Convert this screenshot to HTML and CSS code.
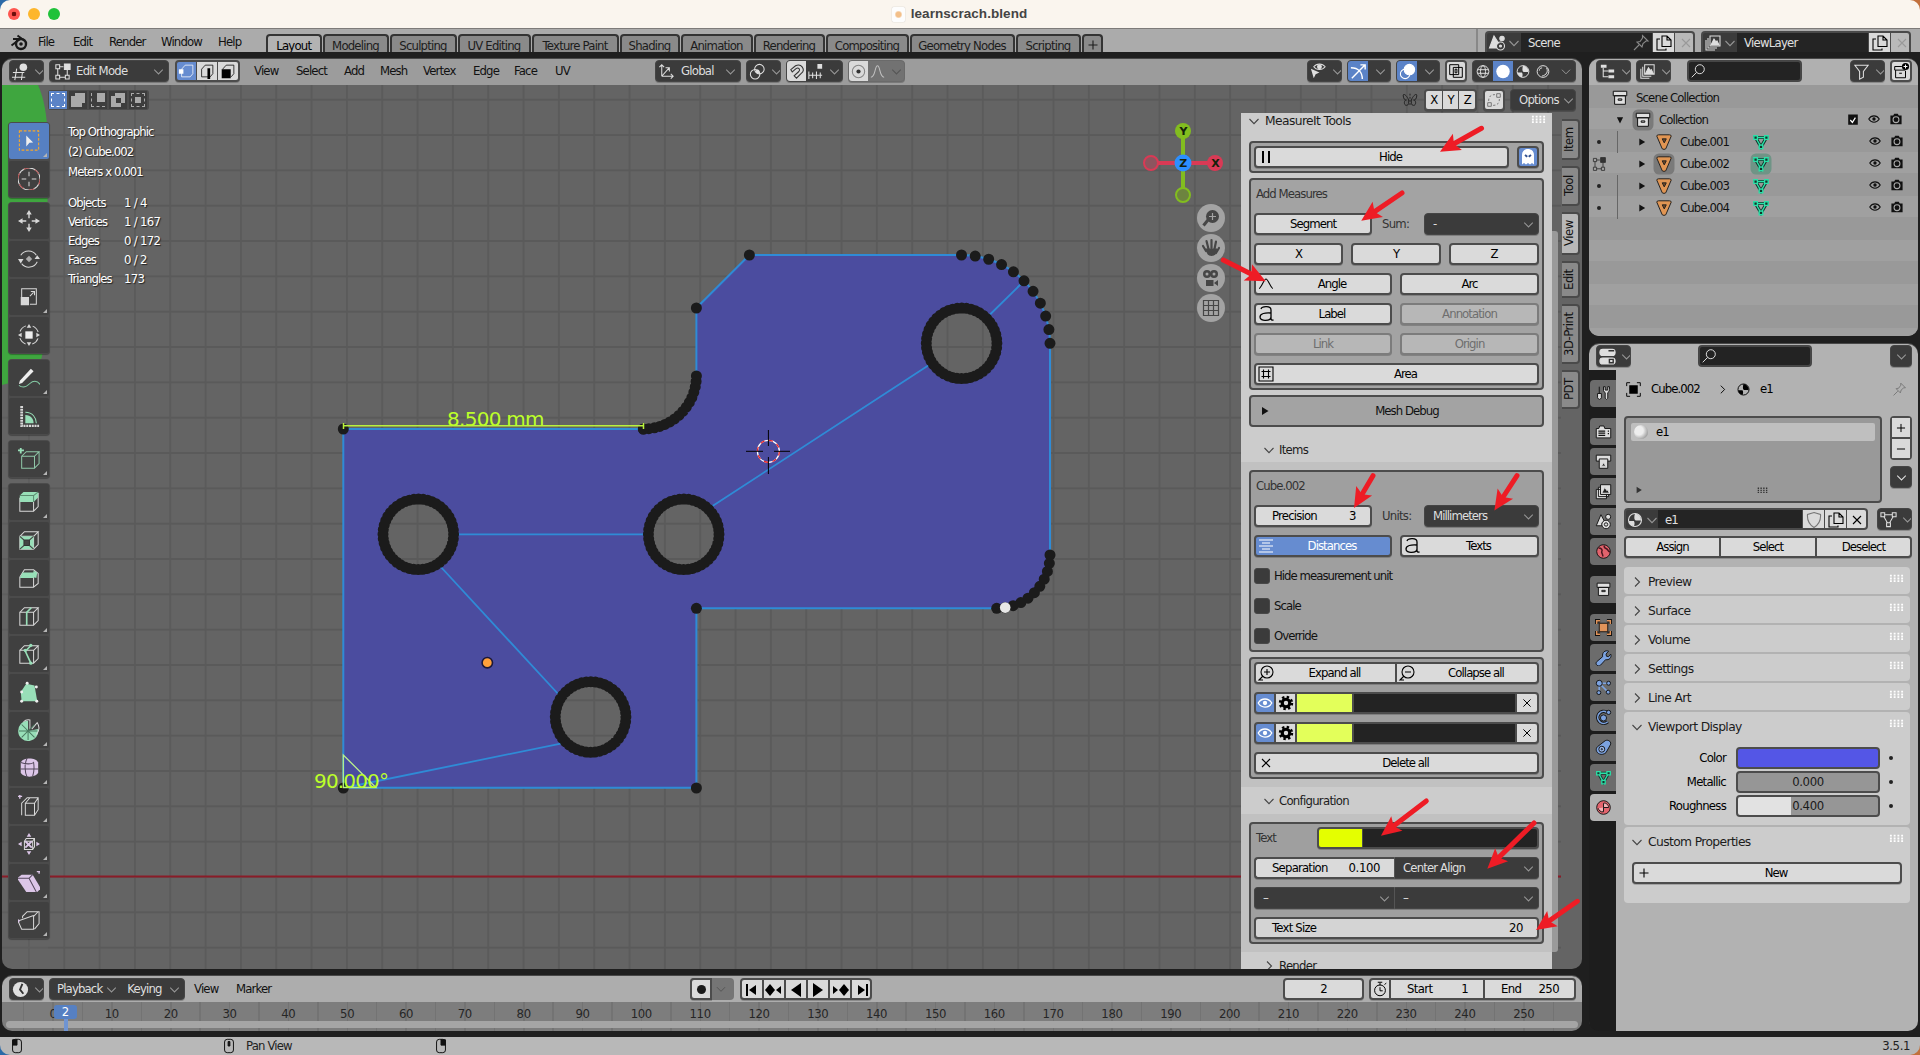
FILE: index.html
```html
<!DOCTYPE html>
<html lang="en">
<head>
<meta charset="utf-8">
<title>learnscrach.blend</title>
<link rel="stylesheet" href="styles.css">
</head>
<body>
<svg class="sprite" aria-hidden="true">
  <symbol id="chev" viewBox="0 0 20 20"><path d="M5.500 8l4.500 4.600L14.500 8"/></symbol>
  <symbol id="right" viewBox="0 0 20 20"><path d="M8 5.500l4.500 4.500L8 14.500"/></symbol>
  <symbol id="tri" viewBox="0 0 20 20"><path d="M7 6l6.500 4L7 14z" fill="currentColor" stroke="none"/></symbol>
  <symbol id="tridown" viewBox="0 0 20 20"><path d="M6.500 7h7L10 14z" fill="currentColor" stroke="none"/></symbol>
  <symbol id="x" viewBox="0 0 20 20"><path d="M6 6l8 8M14 6l-8 8"/></symbol>
  <symbol id="plus" viewBox="0 0 20 20"><path d="M10 5.500v9M5.500 10h9"/></symbol>
  <symbol id="minus" viewBox="0 0 20 20"><path d="M5.500 10h9"/></symbol>
  <symbol id="grip" viewBox="0 0 16 8"><path d="M1 1.500h14M1 4.500h14M1 7.500h14" stroke-width="2" stroke-dasharray="2 2"/></symbol>
  <symbol id="blender" viewBox="0 0 20 20"><path d="M2.500 13.500L11 7H4M8.500 3.500l7 5.200" stroke-width="2"/><circle cx="12" cy="12" r="5" stroke-width="2.400"/><circle cx="12" cy="12" r="1.800" fill="currentColor" stroke="none"/></symbol>
  <symbol id="view3d" viewBox="0 0 20 20"><path d="M2 11h12M1 16h14M6 7l-2 12M12 11l-1 8"/><circle cx="13" cy="5.500" r="4" fill="currentColor" stroke="none"/></symbol>
  <symbol id="editmode" viewBox="0 0 20 20"><path d="M5 7v7M7 16h6M15 8v6M7 5h4"/><path d="M3 3h4v4H3zM3 14h4v4H3zM13 14h4v4h-4z"/><path d="M12 2h6v6h-6z" fill="currentColor"/></symbol>
  <symbol id="cubevert" viewBox="0 0 20 20"><path d="M4 8l4-4.500h8.500V13l-3 3.500H4z" opacity=".75"/><path d="M1 8h5v5H1z" fill="currentColor" stroke="none"/></symbol>
  <symbol id="cubeedge" viewBox="0 0 20 20"><path d="M4 8l4-4.500h8.500V13l-3 3.500H4z" opacity=".75"/><path d="M10.500 7h3v12h-3z" fill="currentColor" stroke="none"/></symbol>
  <symbol id="cubeface" viewBox="0 0 20 20"><path d="M4 8l4-4.500h8.500V13l-3 3.500" opacity=".75"/><path d="M3 8h10v10H3z" fill="currentColor" stroke="none"/></symbol>
  <symbol id="axes" viewBox="0 0 20 20"><path d="M5 15V3M2.500 5.500L5 3l2.500 2.500M5 15h12M14.500 12.500L17 15l-2.500 2.500M5 15l8-9M9 6h4v4"/></symbol>
  <symbol id="pivot" viewBox="0 0 20 20"><circle cx="12" cy="7.500" r="5"/><circle cx="7.500" cy="13" r="5"/><circle cx="10" cy="10" r="1.600" fill="currentColor"/></symbol>
  <symbol id="magnet" viewBox="0 0 20 20"><path d="M4 8l5-4c6-3 11 4 6 8l-5 5-2.500-2.500 5-4.500c2-2-.5-5-3-3L5.500 10.500z"/></symbol>
  <symbol id="snapinc" viewBox="0 0 20 20"><path d="M3 10v8M7 11v6M11 10v8M15 11v6M3 14h14"/><path d="M12 2h5v5h-5z" fill="currentColor" stroke="none"/></symbol>
  <symbol id="prop" viewBox="0 0 20 20"><circle cx="10" cy="10" r="6.500" opacity=".5"/><circle cx="10" cy="10" r="2.200" fill="currentColor" stroke="none"/></symbol>
  <symbol id="falloff" viewBox="0 0 20 20"><path d="M3 16c5 0 4-12 7-12s2 12 7 12"/></symbol>
  <symbol id="viseye" viewBox="0 0 20 20"><path d="M5 5c3-4 9-4 12 0-3 4-9 4-12 0z"/><circle cx="11" cy="5" r="2" fill="currentColor"/><path d="M2 7l9 4-4 2-2 4z" fill="currentColor" stroke="none"/></symbol>
  <symbol id="gizmo" viewBox="0 0 20 20"><path d="M3 17L17 3M12 3h5v5M2 6c8 0 12 5 12 12" stroke-width="1.500"/></symbol>
  <symbol id="overlay" viewBox="0 0 20 20"><circle cx="12" cy="8" r="5.500" fill="currentColor"/><circle cx="7.500" cy="12.500" r="5"/></symbol>
  <symbol id="xray" viewBox="0 0 20 20"><path d="M3 3h10v11H3zM7 6h10v11H7z"/><path d="M9 8h2v4H9z"/></symbol>
  <symbol id="wire" viewBox="0 0 20 20"><circle cx="10" cy="10" r="6.500"/><ellipse cx="10" cy="10" rx="2.800" ry="6.500"/><path d="M4 8h12M4 12h12"/></symbol>
  <symbol id="solid" viewBox="0 0 20 20"><circle cx="10" cy="10" r="7.500" fill="currentColor" stroke="none"/></symbol>
  <symbol id="mat" viewBox="0 0 20 20"><circle cx="10" cy="10" r="6.500"/><path d="M10 3.500a6.500 6.500 0 0 1 6 7h-5c-2 0-2-4-1-7zM3.800 11h5c1 1 1 4 0 5.300-3-.5-5-2.800-5-5.300z" fill="currentColor" stroke="none"/></symbol>
  <symbol id="rendered" viewBox="0 0 20 20"><circle cx="10" cy="10" r="6.500"/><path d="M14 6c2 4 0 8-5 9M6 9c0-2 1-3 3-3"/></symbol>
  <symbol id="scene" viewBox="0 0 20 20"><path d="M7 3L2.500 15h7c-1-3 1-5 2-5z" fill="currentColor"/><circle cx="15" cy="5.500" r="2.200" fill="currentColor"/><circle cx="13.500" cy="13" r="4"/><circle cx="13.500" cy="13" r="1" fill="currentColor"/></symbol>
  <symbol id="layers" viewBox="0 0 20 20"><path d="M7 3h10v10H7zM5 5v10h9M3 7v10h9"/><path d="M8 12l3-6 2 3 1-1 2 4z" fill="currentColor"/></symbol>
  <symbol id="players" viewBox="0 0 20 20"><path d="M1.500 7.500h12v11h-12zM4 5h12v11H4z" fill="currentColor" stroke="#111"/><path d="M6.500 2h12v11.500h-12z" fill="currentColor" stroke="#111"/><path d="M8 12l3.500-7 2.500 4 1-1 2 4z" fill="#222"/></symbol>
  <symbol id="pscene" viewBox="0 0 20 20"><path d="M7 2L1.500 15h7c-1-3 1-5 2.500-5.500z" fill="currentColor" stroke="#111"/><circle cx="15.500" cy="4.500" r="3" fill="currentColor" stroke="#111"/><circle cx="13" cy="13.500" r="5" fill="currentColor" stroke="#111"/><circle cx="13" cy="13.500" r="2" stroke="#111"/></symbol>
  <symbol id="dup" viewBox="0 0 20 20"><path d="M8 3h5l4 4v6.500H8zM13 3v4h4"/><path d="M6 6H3v11h9v-1.500"/></symbol>
  <symbol id="pin" viewBox="0 0 20 20"><path d="M3 17l5-5M6 9l5 5 1-3.500L15 8h2l-5.500-5.500L11.500 5 9 8.500z"/></symbol>
  <symbol id="outliner" viewBox="0 0 20 20"><path d="M3 3h6v3H3zM11 8h6v3h-6zM11 14h6v3h-6z" fill="currentColor" stroke="none"/><path d="M5.500 6v9.500H11M5.500 9.500H11"/></symbol>
  <symbol id="search" viewBox="0 0 20 20"><circle cx="12" cy="8" r="5"/><path d="M8.500 11.500L3 17"/></symbol>
  <symbol id="filter" viewBox="0 0 20 20"><path d="M3 3.500h14l-5 6.500v6l-4 2V10z"/></symbol>
  <symbol id="newcoll" viewBox="0 0 20 20"><path d="M3 5h8M3 5v4h12M4 9v8.500h11V10M8 12.500h3"/><circle cx="15" cy="5" r="4" fill="currentColor" stroke="none"/><path d="M15 2.800v4.400M12.800 5h4.400" stroke="#fff"/></symbol>
  <symbol id="coll" viewBox="0 0 20 20"><path d="M2.500 2.500h15v5h-15zM4 7.500h12v9.500H4z" fill="#e0e0e0" stroke="#111"/><path d="M8 11h4v1.500H8z" stroke="#111"/></symbol>
  <symbol id="mesh" viewBox="0 0 20 20"><path d="M2 3.500q0-1.500 2-1.500h12q2 0 2 1.500L12 17.500q-2 1.500-4 0z" fill="#e09553" stroke="#222"/><path d="M8 6.500h4.500L10.300 11z" fill="#7a4b22" stroke="#222"/></symbol>
  <symbol id="meshdata" viewBox="0 0 20 20"><path d="M4 5h12L10 15.500z" stroke-width="3.600" stroke="#12352b"/><path d="M4 5h12L10 15.500z" stroke-width="1.500"/><path d="M2 3h4v4H2zM14 3h4v4h-4zM8 13.500h4v4H8z" fill="#12352b" stroke-width="1.500"/></symbol>
  <symbol id="tridata" viewBox="0 0 20 20"><path d="M4 5h12L10 15.500z"/><path d="M2 3h4v4H2zM14 3h4v4h-4zM8 13.500h4v4H8z" fill="#444"/></symbol>
  <symbol id="eye" viewBox="0 0 20 20"><path d="M2.500 10c3.500-6 11.500-6 15 0-3.500 6-11.500 6-15 0z" stroke-width="1.500"/><circle cx="10" cy="10" r="2.400" fill="currentColor" stroke="none"/></symbol>
  <symbol id="cam" viewBox="0 0 20 20"><path d="M2 5h4l1.500-2.500h5L14 5h4v12.500H2z" fill="currentColor" stroke="none"/><circle cx="10" cy="11" r="4.200" stroke="#aaa" stroke-width="1.500"/></symbol>
  <symbol id="check" viewBox="0 0 20 20"><path d="M2 1h16v17H2z" fill="currentColor" stroke="none"/><path d="M5.500 10l3.500 4 5-8" stroke="#fff" stroke-width="2"/></symbol>
  <symbol id="editor" viewBox="0 0 20 20"><rect x="2" y="2.500" width="16" height="6.500" rx="3" fill="currentColor"/><rect x="2" y="11.500" width="16" height="6.500" rx="3" fill="currentColor"/><path d="M11 4h6M12 13h4v3.500h-4z" stroke="#333" stroke-width="1.500"/></symbol>
  <symbol id="clock" viewBox="0 0 20 20"><circle cx="10" cy="10" r="8" fill="currentColor" stroke="none"/><path d="M12 4L9.500 10l3.500 4.500" stroke="#333" stroke-width="2"/></symbol>
  <symbol id="butterfly" viewBox="0 0 20 20"><path d="M10 3v14" stroke-dasharray="2 1.500"/><path d="M8.500 10C6 4 2 2 2.500 5.500S4 10 6 10c-3 0-3 6 0 6s2.500-3 2.500-6zM11.500 10c2.500-6 6.500-8 6-4.500S16 10 14 10c3 0 3 6 0 6s-2.500-3-2.500-6z"/></symbol>
  <symbol id="automerge" viewBox="0 0 20 20"><path d="M3 13h4v4H3zM13 3h4v4h-4z"/><path d="M4 11c0-5 3-7 7-7M9 16c5 0 7-3 7-7" stroke-dasharray="2.500 2"/></symbol>
  <symbol id="ghost" viewBox="0 0 20 20"><path d="M4 17.500V8c0-8 12-8 12 0v9.500l-2-1.500-2 1.500-2-1.500-2 1.500L6 16z" fill="#fff" stroke="none"/><path d="M7 8l2.300 1.700M13 8l-2.300 1.700" stroke="#31508f" stroke-width="2"/></symbol>
  <symbol id="pause" viewBox="0 0 20 20"><path d="M7 4v12M13 4v12" stroke-width="2"/></symbol>
  <symbol id="angle" viewBox="0 0 20 20"><path d="M3 14.500c2 0 5-9.500 7-9.500s5 9.500 7 9.500"/></symbol>
  <symbol id="fonta" viewBox="0 0 20 20"><path d="M5 5c1-3 10-3.500 10 1v8.500q0 2 2.500 1.500M15 9c-6-.5-11 .5-11 4 0 5 11 4 11 0" stroke-width="1.300"/></symbol>
  <symbol id="hash" viewBox="0 0 20 20"><path d="M3 3h14v14H3zM7.500 5.500v9M12.500 5.500v9M5.500 7.500h9M5.500 12.500h9"/></symbol>
  <symbol id="center" viewBox="0 0 20 20"><path d="M3 4h14M6 7h8M3 10h14M6 13h8M3 16h14"/></symbol>
  <symbol id="zoomin" viewBox="0 0 20 20"><circle cx="11" cy="9" r="6"/><path d="M7 13l-4 4h4M11 6v6M8 9h6"/></symbol>
  <symbol id="zoomout" viewBox="0 0 20 20"><circle cx="11" cy="9" r="6"/><path d="M7 13l-4 4h4M8 9h6"/></symbol>
  <symbol id="gear" viewBox="0 0 20 20"><circle cx="10" cy="10" r="4.200" stroke-width="3.500"/><circle cx="10" cy="10" r="6.500" stroke-width="3" stroke-dasharray="2.600 2.500"/></symbol>
  <symbol id="stopwatch" viewBox="0 0 20 20"><circle cx="10" cy="11.500" r="6"/><path d="M7.500 2.500h5M10 3v3M10 8v4h3M15 5l2-1.500"/></symbol>
  <symbol id="shield" viewBox="0 0 20 20"><path d="M10 2.500l6.500 2c.5 6-1.500 10-6.500 13-5-3-7-7-6.500-13z" stroke="#777"/></symbol>
  <symbol id="objbox" viewBox="0 0 20 20"><path d="M5 5h10v10H5z" fill="currentColor" stroke="none"/><path d="M2 6V2h4M14 2h4v4M18 14v4h-4M6 18H2v-4"/></symbol>
  <symbol id="pobj" viewBox="0 0 20 20"><path d="M2 6V2h4M14 2h4v4M18 14v4h-4M6 18H2v-4" stroke="#111" stroke-width="4"/><path d="M2 6V2h4M14 2h4v4M18 14v4h-4M6 18H2v-4" stroke-width="1.800"/><path d="M5 5h10v10H5z" fill="currentColor" stroke="#111"/></symbol>
  <symbol id="tools" viewBox="0 0 20 20"><path d="M5 2v8M3 10h4.500v5q-2.200 4-4.500 0z" fill="currentColor" stroke="#111"/><path d="M10 2v4.500q.5 2 2 2.500v6.500q1.500 3 3 0V9q2-1 2-3.500V2h-2v4h-3V2z" fill="currentColor" stroke="#111"/></symbol>
  <symbol id="prender" viewBox="0 0 20 20"><path d="M1.500 6.500h3l1-3h5l1 3h7v11h-17z" fill="currentColor" stroke="#111"/><path d="M4 9.500h8M4 12h8M4 14.500h8M15 9.500h1.500M15 12.500h1.500" stroke="#111" stroke-width="1.500"/></symbol>
  <symbol id="pout" viewBox="0 0 20 20"><path d="M1.500 2.500h17v7h-17z" fill="currentColor" stroke="#111"/><path d="M5 7h10v11H5z" fill="currentColor" stroke="#111"/><path d="M7.500 15.500l2.500-4 3 4z" fill="#333"/></symbol>
  <symbol id="world" viewBox="0 0 20 20"><circle cx="10" cy="10" r="8" fill="currentColor" stroke="#111"/><path d="M4 6c4 0 5 2 4 4s2 3 1 6M11 3c-1 3 1 3 3 4s1 4 4 3" stroke="#4a1820" stroke-width="1.800"/></symbol>
  <symbol id="wrench" viewBox="0 0 20 20"><path d="M2 15l7-6c-1-5 3-8 7-6.500l-3 3.500.5 2.500 2.500.5 2.500-3c1.500 4-2 7.500-6 6.500l-6 6.500c-2.500 2.500-7-1-4.500-4z" fill="currentColor" stroke="#111"/></symbol>
  <symbol id="particles" viewBox="0 0 20 20"><path d="M5 5v11M5 5h10M5 5l10 10" stroke-width="2"/><g fill="currentColor" stroke="#111"><circle cx="5" cy="5" r="3.500"/><circle cx="4.500" cy="16" r="2.300"/><circle cx="16" cy="5" r="2.300"/><circle cx="15.500" cy="15.500" r="2.300"/></g></symbol>
  <symbol id="physics" viewBox="0 0 20 20"><path d="M15 15a7 7 0 1 1-1-11" stroke="#111" stroke-width="4"/><path d="M15 15a7 7 0 1 1-1-11" stroke-width="2"/><circle cx="10" cy="10.500" r="3.600" fill="currentColor" stroke="#111"/><circle cx="16" cy="4" r="2.500" fill="currentColor" stroke="#111"/></symbol>
  <symbol id="constraint" viewBox="0 0 20 20"><path d="M3 9l9-7c4-2 8 2 6 5l-5 9c-7 6-15-2-10-7z" fill="currentColor" stroke="#111"/><circle cx="8" cy="12" r="3.500" stroke="#111" fill="#9ab8ea"/><circle cx="8" cy="12" r=".8" stroke="#111"/></symbol>
  <symbol id="pmat" viewBox="0 0 20 20"><circle cx="10" cy="10" r="8" fill="currentColor" stroke="#111"/><path d="M10 10V5c3-1 6 2 6 5zM10 10v5c-3 1-6-2-6-4" fill="#f4b0b5" stroke="#111"/></symbol>
  <symbol id="mouseL" viewBox="0 0 12 18"><rect x="1" y="1.500" width="10" height="15" rx="3"/><path d="M1 2h5v6H1z" fill="currentColor"/></symbol>
  <symbol id="mouseM" viewBox="0 0 12 18"><rect x="1" y="1.500" width="10" height="15" rx="3"/><path d="M5 4h2v5H5z" fill="currentColor"/></symbol>
  <symbol id="mouseR" viewBox="0 0 12 18"><rect x="1" y="1.500" width="10" height="15" rx="3"/><path d="M6 2h5v6H6z" fill="currentColor"/></symbol>
  <symbol id="tselect" viewBox="0 0 24 24"><rect x="1.500" y="1" width="21" height="21" stroke="#f6a72b" stroke-width="1.200" stroke-dasharray="3 1.800"/><path d="M9 6l7.500 7.500-4 .5L9 18z" fill="#eee" stroke="none"/></symbol>
  <symbol id="tcursor" viewBox="0 0 24 24"><circle cx="12" cy="12" r="12" stroke="#ddd"/><circle cx="12" cy="12" r="12" stroke="#a44" stroke-dasharray="6.280"/><path d="M12 4v5M12 15v5M4 12h5M15 12h5"/></symbol>
  <symbol id="tmove" viewBox="0 0 24 24"><path d="M12 4v5M12 15v5M4 12h5M15 12h5" stroke-width="1.500"/><path d="M12 0l3 5H9zM12 24l3-5H9zM0 12l5-3v6zM24 12l-5-3v6z" fill="currentColor" stroke="none"/></symbol>
  <symbol id="trotate" viewBox="0 0 24 24"><path d="M3 8a10 10 0 0 1 17 0M21 15a10 10 0 0 1-17 2" /><path d="M0 12h6l-3 5zM18 12h6l-3-4z" fill="currentColor" stroke="none"/><path d="M12 8.500l3.500 3.500-3.500 3.500L8.500 12z" fill="#aaa" stroke="none"/></symbol>
  <symbol id="tscale" viewBox="0 0 24 24"><path d="M4 12V3h16v17h-7"/><path d="M3 12h9v9H3z" fill="currentColor" stroke="none"/><path d="M13 11l4-4M14 6h4v4"/></symbol>
  <symbol id="ttrans" viewBox="0 0 24 24"><circle cx="12" cy="12" r="10.500" stroke-dasharray="9 7.490" stroke-dashoffset="-3.750"/><path d="M8 8h8v8H8z" fill="#eee" stroke="none"/><path d="M12 0l2.500 4h-5zM12 24l2.500-4h-5zM0 12l4-2.500v5zM24 12l-4-2.500v5z" fill="currentColor" stroke="none"/></symbol>
  <symbol id="tpen" viewBox="0 0 24 24"><path d="M2 15l12-13 3 2.500L4.500 17.500 1 18.500z" fill="#eee" stroke="none"/><path d="M1 20c5 4 9 1 12-2s8-4 11 1" stroke="#85cda6"/></symbol>
  <symbol id="tmeasure" viewBox="0 0 24 24"><path d="M4 1v22h19" stroke-width="3" stroke-dasharray="2.200 .8"/><path d="M8 20v-9c6 0 9 4 9 9z" fill="#98dfb8" stroke="none"/><path d="M8 8c8 0 12 6 12 12" stroke="#98dfb8"/></symbol>
  <g id="cubelines"><path d="M2 8h15v14H2zM2 8l5-5h15l-5 5M22 3v14l-5 5"/></g>
  <symbol id="taddcube" viewBox="0 0 24 24"><path d="M4 9h14v13H4zM4 9l5-5h14l-5 5M23 4v13l-5 5" stroke="#8fc7a8"/><path d="M3 -1v7M-.5 2.500h7" stroke="#98dfb8" stroke-width="2"/></symbol>
  <symbol id="textrude" viewBox="0 0 24 24"><use href="#cubelines"/><path d="M2 5l4-4h16v6l-5 5H2z" fill="#98dfb8" stroke="none"/><path d="M2 5h15v7M17 5l5-4" stroke="#5b8b70"/></symbol>
  <symbol id="tinset" viewBox="0 0 24 24"><use href="#cubelines"/><path d="M2 8h15v14H2z" fill="#98dfb8" stroke="none"/><path d="M6.500 12h6v6h-6z" fill="#444" stroke="#333"/><path d="M2 8l4.500 4M17 8l-4.500 4M2 22l4.500-4M17 22l-4.500-4" stroke="#444"/></symbol>
  <symbol id="tbevel" viewBox="0 0 24 24"><path d="M2 11v11h15V11M2 11l5-8h10l5 4v11l-5 4"/><path d="M2 12l3-6h12v6zM17 4l4 2-1 6-4-1z" fill="#98dfb8" stroke="none"/></symbol>
  <symbol id="tloop" viewBox="0 0 24 24"><use href="#cubelines"/><path d="M9.500 22V8l5-5" stroke="#98dfb8" stroke-width="1.800"/></symbol>
  <symbol id="tknife" viewBox="0 0 24 24"><use href="#cubelines"/><path d="M14 22L8 9l6-6" stroke="#98dfb8" stroke-width="1.800"/><g fill="#98dfb8" stroke="none"><circle cx="14" cy="22" r="1.800"/><circle cx="8" cy="8" r="1.800"/><circle cx="14" cy="2.500" r="1.800"/></g></symbol>
  <symbol id="tpoly" viewBox="0 0 24 24"><path d="M4 22l-1-10 6-9 9 2 3 17z" fill="#98dfb8" stroke="none"/><g fill="#eee" stroke="none"><circle cx="4" cy="22" r="1.600"/><circle cx="4" cy="12" r="1.600"/><circle cx="10" cy="2.500" r="1.600"/><circle cx="20" cy="6.500" r="1.600"/><circle cx="20.500" cy="22" r="1.600"/></g></symbol>
  <symbol id="tspin" viewBox="0 0 24 24"><path d="M11 13V2a11 11 0 1 0 11 9z" fill="#98dfb8" stroke="none"/><path d="M13 11V1q-4-1-7 2M15 11l6-7c2 3 3 8-1 13"/><path d="M11 13v10M1 13h20M4 20l14-14M4 6l14 14" stroke="#4a7a60"/></symbol>
  <symbol id="tsmooth" viewBox="0 0 24 24"><path d="M3 6c2-6 17-6 19 0v11c-2 6-17 6-19 0z" fill="#dcc6e8" stroke="none"/><path d="M3 13h19M10 1c-3 6-3 15 0 21M3 6c5 2 12 2 14 0 1 6 0 12-1 15" stroke="#54485c"/></symbol>
  <symbol id="tslide" viewBox="0 0 24 24"><path d="M8 9h10v13H8zM4 22V9l6-6h12v13l-4 6M8 9l5-6M18 9l4-6"/><path d="M2 -1v5M-.5 1.500h5" stroke="#dcc6e8" stroke-width="1.500"/></symbol>
  <symbol id="tshrink" viewBox="0 0 24 24"><path d="M7 9h9v9H7zM7 9l2-3h9v9l-2 3M16 9l2-3"/><path d="M8 9l7 7M15 9l-7 7" stroke="#dcc6e8" stroke-width="2"/><path d="M12 0l2.500 4h-5zM12 24l2.500-4h-5zM0 12l4-2.500v5zM24 12l-4-2.500v5z" fill="#dcc6e8" stroke="none"/></symbol>
  <symbol id="tshear" viewBox="0 0 24 24"><path d="M-1 8l5-4h12l9 15-4 4H9z" fill="#dcc6e8" stroke="none"/><path d="M-1 8h13l8 15M12 8l4-4" stroke="#54485c"/><path d="M23 -2v5M20.500 .5h5" stroke="#dcc6e8" stroke-width="1.500"/></symbol>
  <symbol id="trip" viewBox="0 0 24 24"><path d="M17 8v14H4L0 13l17-6M5 10V8l5-5h13v13l-5 6M17 8l5-5"/><circle cx="0" cy="13" r="1.800" fill="#dcc6e8" stroke="none"/></symbol>
</svg>

<div class="window">
  <header class="titlebar">
    <div class="lights"><i class="close"></i><i class="mini"></i><i class="zoom"></i></div>
    <div class="doc"><i class="docicon"></i>learnscrach.blend</div>
  </header>

  <nav class="topbar">
    <svg class="i logo"><use href="#blender"/></svg>
    <div class="menus"><span>File</span><span>Edit</span><span>Render</span><span>Window</span><span>Help</span></div>
    <div class="tabs"><b class="on">Layout</b><b>Modeling</b><b>Sculpting</b><b>UV Editing</b><b>Texture Paint</b><b>Shading</b><b>Animation</b><b>Rendering</b><b>Compositing</b><b>Geometry Nodes</b><b>Scripting</b><b><svg class="i"><use href="#plus"/></svg></b></div>
    <div class="ids">
      <div class="idsel"><span class="dk"><svg class="i"><use href="#scene"/></svg><svg class="i ch"><use href="#chev"/></svg></span><span class="fld">Scene<svg class="i dim"><use href="#pin"/></svg></span><span class="lt"><svg class="i"><use href="#dup"/></svg></span><span class="lt off"><svg class="i"><use href="#x"/></svg></span></div>
      <div class="idsel"><span class="dk"><svg class="i"><use href="#layers"/></svg><svg class="i ch"><use href="#chev"/></svg></span><span class="fld">ViewLayer</span><span class="lt"><svg class="i"><use href="#dup"/></svg></span><span class="lt off"><svg class="i"><use href="#x"/></svg></span></div>
    </div>
  </nav>

  <main class="work">
    <div class="leftcol">
      <section class="area view3d">
        <div class="ahead">
          <div class="dd w35"><svg class="i"><use href="#view3d"/></svg><svg class="i ch"><use href="#chev"/></svg></div>
          <div class="dd w120"><svg class="i"><use href="#editmode"/></svg><em>Edit Mode</em><svg class="i ch"><use href="#chev"/></svg></div>
          <div class="seg selmode"><span class="blue"><svg class="i"><use href="#cubevert"/></svg></span><span><svg class="i"><use href="#cubeedge"/></svg></span><span><svg class="i"><use href="#cubeface"/></svg></span></div>
          <div class="menus vm"><span>View</span><span>Select</span><span>Add</span><span>Mesh</span><span>Vertex</span><span>Edge</span><span>Face</span><span>UV</span></div>
          <div class="dd w88"><svg class="i"><use href="#axes"/></svg><em>Global</em><svg class="i ch"><use href="#chev"/></svg></div>
          <div class="dd w35"><svg class="i"><use href="#pivot"/></svg><svg class="i ch"><use href="#chev"/></svg></div>
          <div class="dd w57 split"><span class="wt"><svg class="i"><use href="#magnet"/></svg></span><svg class="i"><use href="#snapinc"/></svg><svg class="i ch"><use href="#chev"/></svg></div>
          <div class="dd w57 split faded"><span class="wt"><svg class="i"><use href="#prop"/></svg></span><svg class="i"><use href="#falloff"/></svg><svg class="i ch"><use href="#chev"/></svg></div>
          <div class="push dd w35"><svg class="i"><use href="#viseye"/></svg><svg class="i ch"><use href="#chev"/></svg></div>
          <div class="dd w44 split"><span class="bl"><svg class="i"><use href="#gizmo"/></svg></span><svg class="i ch"><use href="#chev"/></svg></div>
          <div class="dd w44 split"><span class="bl"><svg class="i"><use href="#overlay"/></svg></span><svg class="i ch"><use href="#chev"/></svg></div>
          <div class="btn sq"><svg class="i"><use href="#xray"/></svg></div>
          <div class="dd w104 shade"><span><svg class="i"><use href="#wire"/></svg></span><span class="bl"><svg class="i"><use href="#solid"/></svg></span><span><svg class="i"><use href="#mat"/></svg></span><span><svg class="i"><use href="#rendered"/></svg></span><span><svg class="i ch"><use href="#chev"/></svg></span></div>
        </div>

        <div class="stage">
          <svg class="canvas" viewBox="2 85 1580 884">
            <defs>
              <pattern id="grid" x="63.300" y="63.400" width="35.330" height="35.330" patternUnits="userSpaceOnUse"><path d="M1 0v35.330M0 1h35.330" stroke="#5a5a5a" stroke-width="1.800"/></pattern>
            </defs>
            <rect x="2" y="85" width="1580" height="884" fill="#646464"/>
            <path d="M2 85H38q9 20 9.500 52V290q0 45-6 68-8 20-39.500 27z" fill="#3fa63f"/>
            <rect x="2" y="385" width="46" height="584" fill="url(#grid)" opacity=".6"/>
            <rect x="48" y="85" width="1513" height="884" fill="url(#grid)"/>
            <path d="M2 876.500H1561" stroke="#8a1c28" stroke-width="2"/>
            <path fill-rule="evenodd" fill="#4b4c9f" stroke="#2f8bd6" stroke-width="2" d="M343.300 429V787.800H696.400V608.300H996.700A53.300 53.300 0 0 0 1050 555V343.300A88.500 88.500 0 0 0 961.500 255H749.400L696.400 308V376A53 53 0 0 1 643.300 429zM453.600 534.300a35.300 35.300 0 1 0-70.600 0a35.300 35.300 0 1 0 70.600 0zM719 534.300a35.300 35.300 0 1 0-70.600 0a35.300 35.300 0 1 0 70.600 0zM996.900 343.300a35.300 35.300 0 1 0-70.600 0a35.300 35.300 0 1 0 70.600 0zM625.900 717a35.300 35.300 0 1 0-70.600 0a35.300 35.300 0 1 0 70.600 0z"/>
            <g stroke="#2f8bd6" stroke-width="1.800" fill="none"><path d="M455 534.300H648M711 507L929 365M989 315.500L1024 281M440 566L560 696M562 743.300L343.300 788"/></g>
            <g fill="none" stroke="#1b1b1b" stroke-width="11" stroke-linecap="round" stroke-dasharray="0 4.620">
              <circle cx="418.300" cy="534.300" r="35.300"/><circle cx="683.700" cy="534.300" r="35.300"/><circle cx="961.600" cy="343.300" r="35.300"/><circle cx="590.600" cy="717" r="35.300"/>
              <path d="M696.400 376A53 53 0 0 1 643.300 429" stroke-dasharray="0 5.540"/>
              <path d="M1050 555A53.300 53.300 0 0 1 996.700 608.300" stroke-dasharray="0 8.360"/>
              <path d="M1050 343.300A88.400 88.400 0 0 0 961.500 255" stroke-dasharray="0 13.870"/>
            </g>
            <g fill="#1b1b1b"><circle cx="343.300" cy="429" r="5.500"/><circle cx="343.300" cy="788" r="5.500"/><circle cx="696.400" cy="788" r="5.500"/><circle cx="696.400" cy="608.300" r="5.500"/><circle cx="696.400" cy="308" r="5.500"/><circle cx="749.400" cy="255" r="5.500"/><circle cx="643.300" cy="429" r="5.500"/><circle cx="996.700" cy="608.300" r="5.500"/><circle cx="961.500" cy="255" r="5.500"/></g>
            <circle cx="1005.200" cy="607.600" r="5.300" fill="#e8e8e8"/>
            <circle cx="487.300" cy="662.700" r="5.200" fill="#ffa03a" stroke="#1c1838" stroke-width="1.600"/>
            <path d="M343.500 425.700H643.500M343.500 423v6M643.500 423v6" stroke="#b9f23c" stroke-width="1.500"/>
            <path d="M343.300 755V787.500H376z" fill="none" stroke="#b9f08c" stroke-width="1.300"/>
            <text class="dim3" x="447" y="425.700" textLength="97.500">8.500 mm</text>
            <text class="dim3" x="314" y="788" textLength="75">90.000°</text>
            <circle cx="768.400" cy="451.300" r="11" fill="none" stroke="#fff" stroke-width="1.200"/><circle cx="768.400" cy="451.300" r="11" fill="none" stroke="#e22" stroke-width="1.200" stroke-dasharray="4.320"/>
            <path d="M768.400 430v16M768.400 457v17M746 451.300h17M774 451.300h16" stroke="#000"/>
            <path d="M1183 131v64" stroke="#82bd1f" stroke-width="4"/><path d="M1151 163h64" stroke="#d93a55" stroke-width="4"/>
            <circle cx="1183" cy="131" r="8" fill="#82bd1f"/><circle cx="1183" cy="195" r="7" fill="#6d843f" stroke="#82bd1f" stroke-width="2"/>
            <circle cx="1215" cy="163" r="8" fill="#d93a55"/><circle cx="1151" cy="163" r="7" fill="#8d555f" stroke="#d93a55" stroke-width="2"/><circle cx="1183" cy="163" r="8.500" fill="#2c8fff"/>
            <g class="axis"><text x="1183.500" y="135">Y</text><text x="1215.500" y="167">X</text><text x="1183.200" y="167">Z</text></g>
            <g fill="#a3a3a3"><circle cx="1211" cy="218" r="14"/><circle cx="1211" cy="248" r="14"/><circle cx="1211" cy="278" r="14"/><circle cx="1211" cy="308" r="14"/></g>
            <g fill="#464646"><circle cx="1212.500" cy="216.500" r="6.500"/><path d="M1208 220l-4.500 5.500" stroke="#464646" stroke-width="3"/><path d="M1212.500 213v7M1209 216.500h7" stroke="#a3a3a3" stroke-width="1.200"/>
              <path d="M1206 251l-3-5M1208.500 249l-2-8M1211.500 248v-8M1214.500 249l1.500-7.500M1216 253l3-5" stroke="#464646" stroke-width="2.200" stroke-linecap="round"/><path d="M1205.500 248.500h11.500c0 5-2 7.500-5.500 7.500s-5-2.500-6-7.500z"/>
              <circle cx="1207" cy="274" r="4"/><circle cx="1214" cy="274" r="4"/><path d="M1206 280h7.500v6h-7.500zM1214 283l4-3v6z"/><g fill="#a3a3a3"><circle cx="1207" cy="274" r="1.500"/><circle cx="1214" cy="274" r="1.500"/></g>
              <path d="M1203.500 300.500h15v15h-15zM1208.500 300.500v15M1213.500 300.500v15M1203.500 305.500h15M1203.500 310.500h15" fill="none" stroke="#464646" stroke-width="1.200"/></g>
          </svg>

          <div class="selrow"><span class="bl"><i class="dash"></i></span><span><i class="s1"></i></span><span><i class="s2"></i></span><span><i class="s3"></i></span><span><i class="s4"></i></span></div>

          <div class="stats">
            <p>Top Orthographic</p><p>(2) Cube.002</p><p>Meters x 0.001</p>
            <dl><dt>Objects</dt><dd>1 / 4</dd><dt>Vertices</dt><dd>1 / 167</dd><dt>Edges</dt><dd>0 / 172</dd><dt>Faces</dt><dd>0 / 2</dd><dt>Triangles</dt><dd>173</dd></dl>
          </div>

          <div class="toolbar">
            <div class="tg"><span class="t on sub"><svg class="i"><use href="#tselect"/></svg></span><span class="t"><svg class="i"><use href="#tcursor"/></svg></span></div>
            <div class="tg"><span class="t"><svg class="i"><use href="#tmove"/></svg></span><span class="t"><svg class="i"><use href="#trotate"/></svg></span><span class="t sub"><svg class="i"><use href="#tscale"/></svg></span><span class="t"><svg class="i"><use href="#ttrans"/></svg></span></div>
            <div class="tg"><span class="t sub"><svg class="i"><use href="#tpen"/></svg></span><span class="t"><svg class="i"><use href="#tmeasure"/></svg></span></div>
            <div class="tg"><span class="t sub"><svg class="i"><use href="#taddcube"/></svg></span></div>
            <div class="tg"><span class="t sub"><svg class="i"><use href="#textrude"/></svg></span><span class="t"><svg class="i"><use href="#tinset"/></svg></span><span class="t"><svg class="i"><use href="#tbevel"/></svg></span><span class="t sub"><svg class="i"><use href="#tloop"/></svg></span><span class="t sub"><svg class="i"><use href="#tknife"/></svg></span><span class="t"><svg class="i"><use href="#tpoly"/></svg></span><span class="t sub"><svg class="i"><use href="#tspin"/></svg></span><span class="t sub"><svg class="i"><use href="#tsmooth"/></svg></span><span class="t sub"><svg class="i"><use href="#tslide"/></svg></span><span class="t sub"><svg class="i"><use href="#tshrink"/></svg></span><span class="t sub"><svg class="i"><use href="#tshear"/></svg></span><span class="t sub"><svg class="i"><use href="#trip"/></svg></span></div>
          </div>

          <div class="optrow"><svg class="i bf"><use href="#butterfly"/></svg><div class="seg xyz"><span>X</span><span>Y</span><span>Z</span></div><div class="btn sq"><svg class="i g"><use href="#automerge"/></svg></div><div class="dd w66"><em>Options</em><svg class="i ch"><use href="#chev"/></svg></div></div>

          <aside class="side">
            <div class="npanel">
              <h3 class="ph first"><svg class="i"><use href="#chev"/></svg>MeasureIt Tools<svg class="i grip"><use href="#grip"/></svg></h3>
              <div class="boxes">
                <div class="box row hide"><div class="btn lead"><svg class="i"><use href="#pause"/></svg>Hide</div><div class="btn blue"><svg class="i"><use href="#ghost"/></svg></div></div>
                <div class="box">
                  <div class="row lbl">Add Measures</div>
                  <div class="row c3"><div class="btn">Segment</div><label>Sum:</label><div class="dd"><em>-</em><svg class="i ch"><use href="#chev"/></svg></div></div>
                  <div class="row third"><div class="btn">X</div><div class="btn">Y</div><div class="btn">Z</div></div>
                  <div class="row half"><div class="btn lead"><svg class="i"><use href="#angle"/></svg>Angle</div><div class="btn">Arc</div></div>
                  <div class="row half"><div class="btn lead"><svg class="i"><use href="#fonta"/></svg>Label</div><div class="btn off">Annotation</div></div>
                  <div class="row half"><div class="btn off">Link</div><div class="btn off">Origin</div></div>
                  <div class="row"><div class="btn lead"><svg class="i"><use href="#hash"/></svg>Area</div></div>
                </div>
                <div class="box debug"><svg class="i"><use href="#tri"/></svg>Mesh Debug</div>
              </div>
              <h3 class="ph subh items"><svg class="i"><use href="#chev"/></svg>Items</h3>
              <div class="boxes sub1">
                <div class="box">
                  <div class="row lbl">Cube.002</div>
                  <div class="row c3"><div class="btn num"><span>Precision</span><span>3</span></div><label>Units:</label><div class="dd"><em>Millimeters</em><svg class="i ch"><use href="#chev"/></svg></div></div>
                  <div class="row half"><div class="btn lead blue"><svg class="i"><use href="#center"/></svg>Distances</div><div class="btn lead"><svg class="i"><use href="#fonta"/></svg>Texts</div></div>
                  <div class="row ck"><i></i>Hide measurement unit</div>
                  <div class="row ck"><i></i>Scale</div>
                  <div class="row ck"><i></i>Override</div>
                </div>
                <div class="box">
                  <div class="row"><div class="seg ec"><span class="lead"><svg class="i"><use href="#zoomin"/></svg>Expand all</span><span class="lead"><svg class="i"><use href="#zoomout"/></svg>Collapse all</span></div></div>
                  <div class="row"><div class="seg item"><span class="blue"><svg class="i"><use href="#eye"/></svg></span><span><svg class="i"><use href="#gear"/></svg></span><span class="lime"></span><span class="blk"></span><span><svg class="i"><use href="#x"/></svg></span></div></div>
                  <div class="row"><div class="seg item"><span class="blue"><svg class="i"><use href="#eye"/></svg></span><span><svg class="i"><use href="#gear"/></svg></span><span class="lime"></span><span class="blk"></span><span><svg class="i"><use href="#x"/></svg></span></div></div>
                  <div class="row"><div class="btn lead"><svg class="i"><use href="#x"/></svg>Delete all</div></div>
                </div>
              </div>
              <h3 class="ph subh conf"><svg class="i"><use href="#chev"/></svg>Configuration</h3>
              <div class="boxes sub2">
                <div class="box">
                  <div class="row txt"><label>Text</label><div class="seg"><span class="yel"></span><span class="blk"></span></div></div>
                  <div class="row pair"><div class="btn num l"><span>Separation</span><span>0.100</span></div><div class="dd r"><em>Center Align</em><svg class="i ch"><use href="#chev"/></svg></div></div>
                  <div class="row pair"><div class="dd l m"><em>–</em><svg class="i ch"><use href="#chev"/></svg></div><div class="dd r"><em>–</em><svg class="i ch"><use href="#chev"/></svg></div></div>
                  <div class="row"><div class="btn num wide"><span>Text Size</span><span>20</span></div></div>
                </div>
              </div>
              <h3 class="ph subh rend"><svg class="i"><use href="#right"/></svg>Render</h3>
            </div>
            <div class="sbar"></div>
            <div class="vtabs"><span>Item</span><span>Tool</span><span class="on">View</span><span>Edit</span><span>3D-Print</span><span>PDT</span></div>
          </aside>
        </div>
      </section>

      <section class="area timeline">
        <div class="ahead">
          <div class="dd w35"><svg class="i"><use href="#clock"/></svg><svg class="i ch"><use href="#chev"/></svg></div>
          <div class="dd pk"><em>Playback</em><svg class="i ch"><use href="#chev"/></svg><em>Keying</em><svg class="i ch"><use href="#chev"/></svg></div>
          <div class="menus tm"><span>View</span><span>Marker</span></div>
          <div class="rec"><span class="btn"><i></i></span><svg class="i ch"><use href="#chev"/></svg></div>
          <div class="seg play">
            <span><svg class="i"><path d="M5 4v12" stroke-width="2"/><path d="M14 5v10l-7-5z" fill="currentColor"/></svg></span><span><svg class="i"><path d="M6 4l5 6-5 6-5-6z" fill="currentColor"/><path d="M17 6v8l-5-4z" fill="currentColor"/></svg></span><span><svg class="i"><path d="M15 3v14L5 10z" fill="currentColor"/></svg></span><span><svg class="i"><path d="M5 3v14l10-7z" fill="currentColor"/></svg></span><span><svg class="i"><path d="M14 4l5 6-5 6-5-6z" fill="currentColor"/><path d="M3 6v8l5-4z" fill="currentColor"/></svg></span><span><svg class="i"><path d="M15 4v12" stroke-width="2"/><path d="M6 5v10l7-5z" fill="currentColor"/></svg></span>
          </div>
          <div class="btn frame">2</div>
          <div class="seg range"><span><svg class="i"><use href="#stopwatch"/></svg></span><span class="kv"><b>Start</b><b>1</b></span><span class="kv"><b>End</b><b>250</b></span></div>
        </div>
        <div class="ruler">
          <div class="nums"><span>0</span><span>10</span><span>20</span><span>30</span><span>40</span><span>50</span><span>60</span><span>70</span><span>80</span><span>90</span><span>100</span><span>110</span><span>120</span><span>130</span><span>140</span><span>150</span><span>160</span><span>170</span><span>180</span><span>190</span><span>200</span><span>210</span><span>220</span><span>230</span><span>240</span><span>250</span></div>
          <div class="hscroll"></div>
          <div class="playhead">2</div>
        </div>
      </section>
    </div>

    <div class="rightcol">
      <section class="area outliner">
        <div class="ahead">
          <div class="dd w35"><svg class="i"><use href="#outliner"/></svg><svg class="i ch"><use href="#chev"/></svg></div>
          <div class="dd w35"><svg class="i"><use href="#layers"/></svg><svg class="i ch"><use href="#chev"/></svg></div>
          <div class="srch o"><svg class="i"><use href="#search"/></svg></div>
          <div class="dd w35 push"><svg class="i"><use href="#filter"/></svg><svg class="i ch"><use href="#chev"/></svg></div>
          <div class="btn sq"><svg class="i"><use href="#newcoll"/></svg></div>
        </div>
        <div class="tree">
          <div class="tr root"><svg class="i"><use href="#coll"/></svg>Scene Collection</div>
          <div class="tr c1"><svg class="i"><use href="#tridown"/></svg><svg class="i hl"><use href="#coll"/></svg><span>Collection</span><svg class="i ck2"><use href="#check"/></svg><svg class="i s"><use href="#eye"/></svg><svg class="i s"><use href="#cam"/></svg></div>
          <div class="tr c2"><i></i><svg class="i"><use href="#tri"/></svg><svg class="i"><use href="#mesh"/></svg><span>Cube.001</span><svg class="i gr"><use href="#meshdata"/></svg><svg class="i s"><use href="#eye"/></svg><svg class="i s"><use href="#cam"/></svg></div>
          <div class="tr c2"><svg class="i ed"><use href="#editmode"/></svg><svg class="i"><use href="#tri"/></svg><svg class="i hl"><use href="#mesh"/></svg><span>Cube.002</span><svg class="i gr hl2"><use href="#meshdata"/></svg><svg class="i s"><use href="#eye"/></svg><svg class="i s"><use href="#cam"/></svg></div>
          <div class="tr c2"><i></i><svg class="i"><use href="#tri"/></svg><svg class="i"><use href="#mesh"/></svg><span>Cube.003</span><svg class="i gr"><use href="#meshdata"/></svg><svg class="i s"><use href="#eye"/></svg><svg class="i s"><use href="#cam"/></svg></div>
          <div class="tr c2"><i></i><svg class="i"><use href="#tri"/></svg><svg class="i"><use href="#mesh"/></svg><span>Cube.004</span><svg class="i gr"><use href="#meshdata"/></svg><svg class="i s"><use href="#eye"/></svg><svg class="i s"><use href="#cam"/></svg></div>
        </div>
      </section>

      <section class="area props">
        <div class="ahead">
          <div class="dd w35"><svg class="i"><use href="#editor"/></svg><svg class="i ch"><use href="#chev"/></svg></div>
          <div class="srch p"><svg class="i"><use href="#search"/></svg></div>
          <div class="dd sqd push"><svg class="i ch"><use href="#chev"/></svg></div>
        </div>
        <div class="pbody">
          <div class="ptabs">
            <span><svg class="i"><use href="#tools"/></svg></span>
            <span class="gap"><svg class="i"><use href="#prender"/></svg></span><span><svg class="i"><use href="#pout"/></svg></span><span><svg class="i"><use href="#players"/></svg></span><span><svg class="i"><use href="#pscene"/></svg></span><span class="red"><svg class="i"><use href="#world"/></svg></span>
            <span class="gap"><svg class="i"><use href="#coll"/></svg></span>
            <span class="gap or"><svg class="i"><use href="#pobj"/></svg></span><span class="bu"><svg class="i"><use href="#wrench"/></svg></span><span class="bu"><svg class="i"><use href="#particles"/></svg></span><span class="bu"><svg class="i"><use href="#physics"/></svg></span><span class="bu"><svg class="i"><use href="#constraint"/></svg></span><span class="gn"><svg class="i"><use href="#meshdata"/></svg></span><span class="red on"><svg class="i"><use href="#pmat"/></svg></span>
          </div>
          <div class="pcontent">
            <div class="crumb"><svg class="i"><use href="#objbox"/></svg><span>Cube.002</span><svg class="i"><use href="#right"/></svg><svg class="i"><use href="#mat"/></svg><span>e1</span><svg class="i pn"><use href="#pin"/></svg></div>
            <div class="slots"><div class="list"><div class="slot"><i class="ball"></i>e1</div><div class="lfoot"><svg class="i"><use href="#tri"/></svg><svg class="i gripd"><use href="#grip"/></svg></div></div>
              <div class="lbtns"><div class="pm"><span><svg class="i"><use href="#plus"/></svg></span><span><svg class="i"><use href="#minus"/></svg></span></div><div class="dd sqd"><svg class="i wh"><use href="#chev"/></svg></div></div></div>
            <div class="idrow"><div class="idsel mt"><span class="dk"><svg class="i"><use href="#mat"/></svg><svg class="i ch"><use href="#chev"/></svg></span><span class="fld">e1</span><span class="lt"><svg class="i"><use href="#shield"/></svg></span><span class="lt"><svg class="i"><use href="#dup"/></svg></span><span class="lt"><svg class="i"><use href="#x"/></svg></span></div><div class="dd w35"><svg class="i"><use href="#tridata"/></svg><svg class="i ch"><use href="#chev"/></svg></div></div>
            <div class="seg asd"><span>Assign</span><span>Select</span><span>Deselect</span></div>
            <div class="panels">
              <div class="panel"><h4><svg class="i"><use href="#right"/></svg>Preview<svg class="i grip"><use href="#grip"/></svg></h4></div>
              <div class="panel"><h4><svg class="i"><use href="#right"/></svg>Surface<svg class="i grip"><use href="#grip"/></svg></h4></div>
              <div class="panel"><h4><svg class="i"><use href="#right"/></svg>Volume<svg class="i grip"><use href="#grip"/></svg></h4></div>
              <div class="panel"><h4><svg class="i"><use href="#right"/></svg>Settings<svg class="i grip"><use href="#grip"/></svg></h4></div>
              <div class="panel"><h4><svg class="i"><use href="#right"/></svg>Line Art<svg class="i grip"><use href="#grip"/></svg></h4></div>
              <div class="panel vd"><h4><svg class="i"><use href="#chev"/></svg>Viewport Display<svg class="i grip"><use href="#grip"/></svg></h4>
                <div class="prop"><label>Color</label><div class="val color"></div><i></i></div>
                <div class="prop"><label>Metallic</label><div class="val">0.000</div><i></i></div>
                <div class="prop"><label>Roughness</label><div class="val slider">0.400</div><i></i></div>
              </div>
              <div class="panel cp"><h4><svg class="i"><use href="#chev"/></svg>Custom Properties<svg class="i grip"><use href="#grip"/></svg></h4><div class="btn lead"><svg class="i"><use href="#plus"/></svg>New</div></div>
            </div>
          </div>
        </div>
      </section>
    </div>
  </main>

  <footer class="status"><svg class="i ms"><use href="#mouseL"/></svg><svg class="i ms"><use href="#mouseM"/></svg><span>Pan View</span><svg class="i ms"><use href="#mouseR"/></svg><span class="ver">3.5.1</span></footer>
</div>

<svg class="arrows" viewBox="0 0 1920 1055">
  <defs><marker id="head" markerUnits="userSpaceOnUse" markerWidth="30" markerHeight="24" refX="15" refY="12" orient="auto" viewBox="0 0 30 24"><path d="M28 12L8 2.800l4 9.200-4 9.200z" fill="#ee1c25"/></marker></defs>
  <g stroke="#ee1c25" stroke-width="5" stroke-linecap="round">
    <path marker-end="url(#head)" d="M1481.500 128.300L1451.300 145.300"/><path marker-end="url(#head)" d="M1402 193L1372 213.400"/><path marker-end="url(#head)" d="M1223.300 260L1254.100 275.500"/><path marker-end="url(#head)" d="M1373 475.700L1360.600 496.800"/><path marker-end="url(#head)" d="M1517 475.700L1501.500 499.500"/><path marker-end="url(#head)" d="M1426.300 801L1391.300 827.800"/><path marker-end="url(#head)" d="M1534 823L1496.600 859.600"/><path marker-end="url(#head)" d="M1577.300 901.300L1546.700 922.600"/>
  </g>
</svg>
</body>
</html>
```
FILE: styles.css
```css
* { box-sizing: border-box; margin: 0; padding: 0; }
body { width: 1920px; height: 1055px; overflow: hidden; position: relative; background: linear-gradient(90deg, #2b6aa8 0 50%, #c2703c 50%);
  font: 11.7px/14px "DejaVu Sans", sans-serif; letter-spacing: -.93px; color: #111; }
i, em { font-style: normal; }
b, h3, h4 { font-weight: normal; }
.sprite { position: absolute; width: 0; height: 0; }
.i { width: 20px; height: 20px; flex: none; fill: none; stroke: currentColor; stroke-width: 1.1; overflow: visible; }
.arrows { position: absolute; inset: 0; width: 1920px; height: 1055px; }

.window { height: 1055px; display: grid; grid-template-rows: 29px 23px 985px 18px; border-radius: 10px; overflow: hidden; }

.titlebar { background: #faf5ee; border-bottom: 1px solid #7d7b79; display: flex; align-items: center; position: relative; justify-content: center; }
.lights { position: absolute; left: 8px; display: flex; gap: 8px; }
.lights i { width: 12px; height: 12px; border-radius: 50%; }
.close { background: radial-gradient(circle, #6d0f0c 0 2px, #fe5650 2.600px); }
.mini { background: #fdb62c; }
.zoom { background: #1fc23a; }
.doc { font: bold 13.500px/20px "Liberation Sans", sans-serif; letter-spacing: .06px; color: #444; display: flex; gap: 6px; align-items: center; margin-left: -1px; }
.docicon { width: 13px; height: 15px; border-radius: 2px; background: radial-gradient(circle, #f3c08a 0 2.500px, #fdfdfd 4px); box-shadow: 0 0 1px #999; }

.topbar { background: #ababab; display: flex; position: relative; padding-left: 9px; }
.logo { width: 20px; height: 20px; margin-top: 3px; color: #1a1a1a; }
.menus { display: grid; align-items: center; white-space: nowrap; letter-spacing: -.85px; }
.topbar .menus { margin-left: 9px; grid-template-columns: 35px 36px 52px 57px 48px; padding-top: 2px; width: 228px; height: 26px; margin-top: -1px; }
.tabs { display: grid; grid-template-columns: 55.500px 66px 67px 73px 87px 60px 72px 71px 83px 105px 65px 21px; gap: 1px; align-self: end; height: 18px; white-space: nowrap; letter-spacing: -.8px; }
.tabs b { background: #8a8a8a; border: 2px solid #343434; border-bottom: 0; border-radius: 4px 4px 0 0; text-align: center; line-height: 20px; overflow: hidden; color: #1c1c1c; }
.tabs .on { background: #b3b3b3; color: #000; }
.tabs .i { margin-top: -1px; margin-left: -1px; }
.ids { margin-left: auto; border-left: 2px solid #888; padding: 2px 9px 0 7px; display: flex; gap: 6px; letter-spacing: -.75px; }
.idsel { display: grid; grid-template-columns: 34px 131px 22px 23px; height: 21px; border: 2px solid #4a4a4a; border-bottom: 0; border-radius: 4px 4px 0 0; overflow: hidden; width: 210px; background: #4a4a4a; }
.idsel > span { display: flex; align-items: center; justify-content: center; }
.dk { background: #3b3b3b; color: #ddd; }
.dk .i { margin-right: -3px; }
.fld { background: #242424; color: #e0e0e0; padding: 0 1px 0 7px; }
.idsel > .fld { justify-content: space-between; }
.lt { background: #dadada; color: #000; margin-left: 1px; }
.lt.off { background: #b9b9b9; color: #999; }
.dim { color: #888; }

.work { background: #1f1f1f; padding: 7px 2px 6px; display: grid; grid-template-columns: 1580px 329px; gap: 7px; }
.leftcol { display: grid; grid-template-rows: 910px 55px; gap: 7px; }
.rightcol { display: grid; grid-template-rows: 277px 687px; gap: 8px; }
.area { border-radius: 10px; overflow: hidden; box-shadow: 0 -1px 0 #484848; }
.ahead { height: 26px; display: flex; align-items: flex-start; padding: 1px 6px 0 7px; gap: 5px; background: #adadad; }
.view3d .ahead { background: #9c9c9c; }

.dd { height: 22px; background: #3b3b3b; border: 1px solid #454545; border-radius: 4px; color: #dfdfdf; display: flex; align-items: center; box-shadow: 0 1px 0 rgba(0,0,0,.22); white-space: nowrap; overflow: hidden; }
.dd .i { width: 19px; height: 19px; }
.dd .ch:last-child { margin-left: auto; }
.ch { color: #959595; }
.w35 { width: 35px; padding-left: 1px; }
.w35 .ch { margin-right: -2px; }
.w120 { width: 120px; padding-left: 3px; margin-right: 1px; }
.w120 em { margin-left: 4px; letter-spacing: -.75px; }
.w88 { width: 86px; padding-left: 1px; }
.w88 em { margin-left: 5px; letter-spacing: -.75px; }
.w57 { width: 57px; }
.w44 { width: 44px; }
.w66 { width: 66px; padding-left: 8px; letter-spacing: -.75px; }
.w104 { width: 104px; }
.split span, .shade span { width: 20px; height: 20px; display: grid; place-items: center; }
.split .wt { background: #dadada; color: #333; }
.bl { background: #5b83c7; color: #fff; }
.faded { background: #727272; border-color: #6a6a6a; color: #c0c0c0; }
.faded .ch { color: #565656; }
.shade { gap: 0; }
.shade .i { width: 18px; }
.shade span:last-child { margin-left: auto; }
.push { margin-left: auto; }
.btn { height: 22px; border: 2px solid #4c4c4c; border-radius: 4px; background: #dadada; color: #000; display: flex; align-items: center; justify-content: center; box-shadow: 0 1px 0 rgba(0,0,0,.2); white-space: nowrap; }
.sq { width: 22px; }
.sq .i { width: 18px; height: 18px; }
.seg { display: grid; height: 22px; border: 2px solid #4c4c4c; border-radius: 4px; background: #4c4c4c; gap: 2px; overflow: hidden; box-shadow: 0 1px 0 rgba(0,0,0,.2); }
.seg > span { background: #dadada; color: #000; display: flex; align-items: center; justify-content: center; white-space: nowrap; }
.seg > .blue, .btn.blue, .seg > .bl { background: #668cd0; color: #fff; }
.selmode { width: 65px; grid-template-columns: 19px 20px 1fr; gap: 1px; }
.selmode .i { width: 18px; height: 18px; }
.vm { height: 22px; margin-left: 9px; grid-template-columns: 42px 48px 36px 43px 50px 41px 41px 95px; }

.stage { position: relative; height: 884px; }
.canvas { position: absolute; inset: 0; width: 1580px; height: 884px; }
.dim3 { font-size: 20px; fill: #bcff2a; letter-spacing: 0; }
.axis text { font-size: 11px; font-weight: bold; text-anchor: middle; fill: #14210a; letter-spacing: 0; }
.selrow { position: absolute; left: 46px; top: 5px; display: flex; gap: 2px; background: #4b4b4b; padding: 1px; border-radius: 3px; height: 20px; width: 101px; }
.selrow span { width: 18px; height: 18px; display: grid; place-items: center; background: #3d3d3d; }
.selrow .bl { background: #5b83c7; }
.selrow i { width: 14px; height: 14px; }
.dash { border: 1px dashed #fff; }
.s1 { background: linear-gradient(#aaa, #aaa) 0 3px / 11px 11px no-repeat, linear-gradient(#aaa, #aaa) 4px 0 / 10px 10px no-repeat; }
.s2 { background: linear-gradient(#aaa, #aaa) 5px 0 / 9px 9px no-repeat; border-left: 1px dashed #aaa; border-bottom: 1px dashed #aaa; }
.s3 { background: linear-gradient(#3d3d3d, #3d3d3d) 5px 5px / 5px 5px no-repeat, linear-gradient(#aaa, #aaa) 0 3px / 10px 11px no-repeat, linear-gradient(#aaa, #aaa) 4px 0 / 10px 10px no-repeat; }
.s4 { background: linear-gradient(#aaa, #aaa) 50% / 6px 6px no-repeat; border: 1px dashed #aaa; }
.stats { position: absolute; left: 66px; top: 37px; color: #fff; text-shadow: 1px 1px 1px #222; white-space: nowrap; letter-spacing: -.93px; }
.stats dd { letter-spacing: -.7px; }
.stats p { height: 20px; line-height: 20px; }
.stats dl { display: grid; grid-template-columns: 56px 90px; grid-auto-rows: 19px; line-height: 19px; margin-top: 12px; }
.toolbar { position: absolute; left: 6px; top: 37px; width: 42px; display: grid; gap: 5px; }
.tg { background: #4b4b4b; padding: 1px; border-radius: 4px; display: grid; gap: 2px; box-shadow: 0 1px 1px rgba(0,0,0,.3); }
.tg:first-child { margin-bottom: -1px; }
.t { height: 36px; background: #404040; border-radius: 2px; display: grid; place-items: center; position: relative; color: #d8d8d8; }
.t .i { width: 22px; height: 22px; }
.t.on { background: #5680c2; }
.t.sub::after { content: ""; position: absolute; right: 2px; bottom: 2px; border: 2px solid; border-color: transparent #b5b5b5 #b5b5b5 transparent; }
.optrow { position: absolute; right: 6px; top: 4px; display: flex; align-items: center; gap: 5px; }
.bf { width: 18px; height: 18px; color: #222; }
.xyz { width: 53px; grid-template-columns: repeat(3, 1fr); margin-right: 1px; gap: 1px; }
.g { color: #777; }

.side { position: absolute; left: 1239px; top: 28px; height: 856px; display: flex; align-items: flex-start; }
.npanel { width: 311px; height: 856px; background: #cccccc; overflow: hidden; }
.ph { display: flex; align-items: center; font-size: 12.300px; color: #1c1c1c; letter-spacing: -.6px; white-space: nowrap; }
.ph .i { color: #444; }
.first { height: 16px; padding: 0 6px 0 3px; }
.first .i:first-child { margin-right: 1px; }
.i.grip { width: 15px; height: 8px; margin-left: auto; color: #fff; stroke-width: 1; }
.first .grip { margin-top: -5px; }
.boxes { padding: 12px 8px 0 8px; display: grid; gap: 5px; }
.box { border: 2px solid #4c4c4c; border-radius: 4px; background: #a3a3a3; padding: 3px; display: grid; gap: 8px; width: 295px; }
.row { display: grid; height: 22px; align-items: center; grid-template-columns: 285px; }
.box.hide { height: 32px; grid-template-columns: 255px 22px; gap: 8px; }
.lead { position: relative; padding-left: 18px; }
.lead .i { position: absolute; left: 0; }
.box .lbl { padding-left: 2px; height: 22px; color: #333; }
.c3 { grid-template-columns: 118px 52px 115px; }
.c3 label { padding-left: 10px; color: #333; letter-spacing: -.75px; }
.c3 em { padding-left: 8px; }
.third { grid-template-columns: 89px 90px 90px; gap: 8px; }
.half { grid-template-columns: 138px 139px; gap: 8px; }
.btn.off { background: #b7b7b7; border-color: #7c7c7c; color: #6e6e6e; }
.debug { height: 32px; display: flex; align-items: center; justify-content: center; position: relative; padding-left: 24px; }
.debug .i { position: absolute; left: 4px; }
.subh { padding-left: 18px; font-size: 11.700px; letter-spacing: -.72px; }
.items { height: 35px; padding-top: 11px; }
.conf { height: 27px; }
.rend { height: 28px; }
.sub1, .sub2 { background: #c1c1c1; padding-top: 8px; }
.sub1 { height: 325px; align-content: start; }
.sub2 { height: 138px; align-content: start; }
.sub1 .box, .sub2 .box { background: #9f9f9f; }
.num { justify-content: space-between; padding: 0 14px 0 16px; letter-spacing: -.8px; }
.num span:last-child { letter-spacing: -.4px; }
.num.wide { background: #d4d4d4; }
.ck { display: flex; letter-spacing: -.96px; }
.ck i { width: 16px; height: 16px; background: #3b3b3b; border: 1px solid #484848; border-radius: 3px; margin-right: 4px; }
.ec { grid-template-columns: 139px 1fr; }
.item { grid-template-columns: 18px 19px 55px 1fr 20px; }
.item .i { width: 18px; height: 18px; }
.lime { background: #e3ff5a !important; }
.blk { background: #232323 !important; }
.yel { background: #e4ff00 !important; }
.txt { grid-template-columns: 63px 222px; }
.txt label { padding-left: 2px; color: #333; }
.txt .seg { grid-template-columns: 43px 1fr; gap: 1px; }
.pair { grid-template-columns: 140px 145px; }
.pair em { padding-left: 8px; letter-spacing: -.85px; }
.l { border-radius: 4px 0 0 4px; border-right-width: 0; }
.r { border-radius: 0 4px 4px 0; border-left-color: #555; }
.sbar { width: 6px; height: 721px; margin-top: 118px; background: #9a9a9a; border-radius: 0 3px 3px 0; }
.vtabs { margin-left: 4px; padding-top: 6px; display: grid; grid-template-rows: 41px 40px 43px 37px 60px 39px; gap: 6px; }
.vtabs span { width: 18px; writing-mode: vertical-rl; transform: rotate(180deg); text-align: center; background: #8a8a8a; border: 2px solid #4a4a4a; border-right: 0; border-radius: 4px 0 0 4px; line-height: 15px; letter-spacing: -.5px; }
.vtabs .on { background: #b8b8b8; }

.timeline .ahead { padding-top: 2px; }
.pk { width: 136px; padding-left: 7px; margin-right: 4px; letter-spacing: -.85px; }
.pk em:nth-of-type(2) { margin-left: 6px; }
.tm { grid-template-columns: 42px 100px; height: 22px; width: 142px; }
.rec { margin-left: 349px; width: 44px; height: 22px; background: #757575; border-radius: 4px; display: flex; align-items: center; margin-right: 1px; }
.rec .btn { width: 22px; border-radius: 4px 0 0 4px; }
.rec i { width: 9px; height: 9px; border-radius: 50%; background: #1a1a1a; }
.rec .ch { color: #555; width: 18px; }
.play { width: 132px; grid-template-columns: repeat(6, 1fr); }
.play .i { stroke-width: 0; }
.play [stroke-width] { stroke-width: 2; }
.frame { width: 81px; margin-left: auto; }
.range { width: 207px; grid-template-columns: 18px 92px 1fr; letter-spacing: -.6px; }
.range .i { width: 18px; height: 18px; }
.kv { padding: 0 15px 0 16px; }
.seg > .kv { justify-content: space-between; }
.ruler { height: 29px; background: #7d7d7d; position: relative; overflow: hidden; }
.nums { display: grid; grid-template-columns: repeat(26, 58.830px); padding-left: 21.600px; text-align: center; color: #262626; letter-spacing: -.4px; line-height: 24px; height: 29px; background: repeating-linear-gradient(90deg, transparent 0 21px, #737373 21px 22.500px, transparent 22.500px 29.415px) 0 0 / 100% 100%; }
.hscroll { position: absolute; left: 4px; right: 4px; top: 19px; height: 7px; border-radius: 4px; background: #a5a5a5; }
.playhead { position: absolute; left: 52px; top: 3px; width: 23px; height: 14px; background: #5680c2; border-radius: 3px; color: #fff; text-align: center; letter-spacing: 0; }
.playhead::after { content: ""; position: absolute; left: 10px; top: 14px; width: 4px; height: 12px; background: #6f94d2; }

.outliner { background: #999; }
.outliner .ahead { background: #b0b0b0; }
.srch { height: 22px; background: #232323; border: 2px solid #464646; border-radius: 4px; color: #ddd; }
.srch .i { width: 18px; height: 18px; }
.srch.o { width: 115px; margin-left: 11px; }
.tree { height: 251px; padding-top: 2px; background: repeating-linear-gradient(#999 0 23px, #a0a0a0 23px 45px, #999 45px 45px) 0 0 / 100% 44px; letter-spacing: -.88px; }
.tr { height: 22px; display: flex; align-items: center; }
.tr .i { width: 18px; height: 18px; }
.root { padding-left: 22px; gap: 7px; }
.c1 { padding-left: 22px; }
.c1 .hl { margin: 0 7px 0 5px; }
.tr span { flex: none; }
.c1 span { width: 188px; }
.hl { background: #7a7a7a; border-radius: 4px; box-shadow: 0 0 0 1.500px #7a7a7a; }
.hl2 { background: #6f9486; border-radius: 4px; box-shadow: 0 0 0 1.500px #6f9486; }
.tr .s { width: 14px; height: 14px; margin: -3px 0 0 8px; color: #111; }
.tr .ck2 { width: 12px; height: 12px; margin-right: 0; }
.tr.c2 > i { width: 4px; height: 4px; border-radius: 50%; background: #222; margin: 0 39px 0 8px; position: relative; }
.c2 > i::after { content: ""; position: absolute; left: 20px; top: -9px; width: 1px; height: 22px; background: #666; }
.tr .ed { width: 16px; height: 16px; margin: 0 33px 0 2px; color: #333; }
.c2 .i:nth-child(2) { margin: 0 2px 0 -7px; }
.c2 .i:nth-child(3) { margin: 0 7px 0 2px; }
.c2 span { width: 72px; }
.gr { color: #2be0a8; }
.tr.c2 .gr { margin-right: 98px; }
.c2 .gr + .s { margin-left: 0; }

.props { background: #1d1d1d; display: grid; grid-template-rows: 26px 1fr; }
.props .ahead { background: #b2b2b2; }
.srch.p { width: 114px; margin-left: 62px; }
.sqd { width: 22px; justify-content: center; }
.sqd .i.i { margin: 0; }
.pbody { display: grid; grid-template-columns: 27px 302px; }
.ptabs { padding: 10px 0 0 1px; display: flex; flex-direction: column; gap: 3px; }
.ptabs span { height: 27px; background: #6c6c6c; border-radius: 4px 0 0 4px; display: grid; place-items: center; color: #dedede; flex: none; }
.ptabs .gap { margin-top: 8px; }
.ptabs .i { width: 17px; height: 17px; }
.ptabs .red { color: #e2636d; } .ptabs .or { color: #e0935a; } .ptabs .bu { color: #7ba2e0; } .ptabs .gn { color: #2be0a8; }
.ptabs .on { background: #b2b2b2; }
.pcontent { background: #b2b2b2; padding: 8px 6px 0 8px; }
.crumb { height: 22px; display: flex; align-items: center; color: #000; margin-bottom: 16px; }
.crumb .i { width: 17px; height: 17px; margin-left: 1px; }
.crumb span:nth-of-type(1) { width: 62px; margin-left: 9px; }
.crumb span:nth-of-type(2) { margin-left: 8px; }
.crumb .i:nth-of-type(2) { margin-right: 3px; }
.crumb .pn { margin-left: auto; margin-right: 4px; color: #777; }
.slots { display: flex; gap: 8px; height: 92px; }
.list { width: 258px; height: 87px; border: 2px solid #4c4c4c; border-radius: 4px; background: #999; padding: 5px; display: flex; flex-direction: column; justify-content: space-between; }
.slot { height: 18px; background: #bfbfbf; border-radius: 2px; display: flex; align-items: center; gap: 8px; padding-left: 3px; color: #000; }
.ball { width: 14px; height: 14px; border-radius: 50%; background: radial-gradient(circle at 35% 40%, #eee 0 35%, #aaa 70%, #555); }
.lfoot { height: 12px; display: flex; align-items: center; }
.lfoot .i:first-child { width: 16px; color: #333; }
.lfoot .gripd { width: 11px; height: 6px; margin-left: 110px; color: #333; }
.lbtns { display: grid; align-content: start; gap: 6px; }
.pm { width: 22px; height: 44px; display: grid; gap: 2px; border: 2px solid #4c4c4c; background: #4c4c4c; border-radius: 4px; }
.pm span { background: #dadada; display: grid; place-items: center; color: #000; }
.pm .i { width: 18px; height: 18px; }
.wh { color: #ddd; }
.idrow { display: flex; gap: 9px; }
.idsel.mt { width: 244px; height: 22px; border-bottom: 2px solid #4a4a4a; border-radius: 4px; grid-template-columns: 32px 144px 22px 22px 20px; }
.asd { margin-top: 6px; grid-template-columns: 93px 94px 1fr; }
.panels { display: grid; grid-template-columns: 286px; gap: 2px; margin-top: 9px; }
.panel { background: #cccccc; border-radius: 4px; min-height: 27px; padding: 0 8px; }
.panel h4 { height: 27px; display: flex; align-items: center; font-size: 12.300px; letter-spacing: -.62px; color: #1c1c1c; margin: 0 -2px 0 -5px; padding-top: 2px; }
.panel h4 .i:first-child { margin-right: 1px; color: #444; }
.panel .grip { margin-top: -7px; }
.vd { height: 113px; }
.cp { height: 76px; }
.prop { display: grid; grid-template-columns: 94px 144px 12px; column-gap: 10px; height: 24px; align-items: center; color: #000; }
.vd h4 { margin-bottom: 7px; }
.prop label { text-align: right; letter-spacing: -.75px; }
.val { height: 22px; border: 2px solid #4c4c4c; border-radius: 4px; background: #969696; text-align: center; line-height: 18px; letter-spacing: -.4px; color: #1a1a1a; }
.color { background: #5456e6; }
.slider { background: linear-gradient(90deg, #e2e2e2 38%, #969696 38%); }
.prop i { width: 4px; height: 4px; border-radius: 50%; background: #222; margin-left: -1px; }
.cp .btn { margin-top: 8px; width: 270px; padding-left: 18px; }

.status { background: #b8b8b8; display: flex; align-items: center; padding: 0 10px 0 11px; color: #222; }
.ms { width: 12px; height: 16px; color: #111; }
.ms:nth-of-type(2) { margin-left: 200px; margin-right: 11px; }
.status span:first-of-type { width: 189px; letter-spacing: -.85px; }
.ver { margin-left: auto; letter-spacing: -.4px; }
```
